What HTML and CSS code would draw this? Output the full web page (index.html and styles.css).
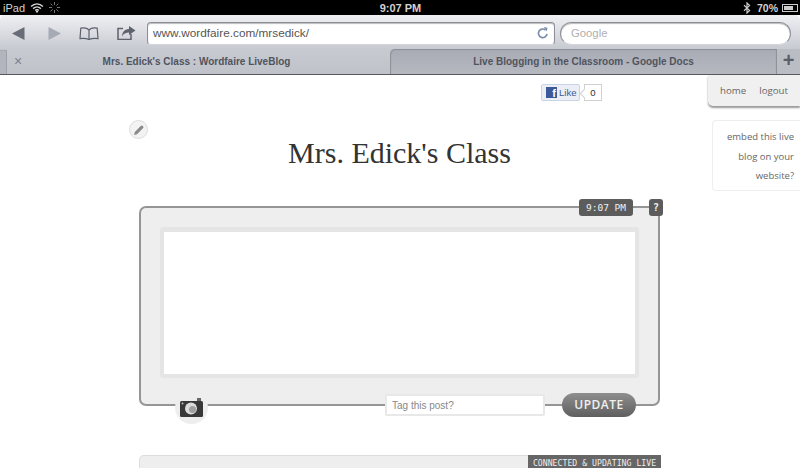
FILE: index.html
```html
<!DOCTYPE html>
<html lang="en">
<head>
<meta charset="utf-8">
<title>Mrs. Edick's Class : Wordfaire LiveBlog</title>
<link rel="stylesheet" href="styles.css">
</head>
<body>
<header class="status">
  <div class="status-left">
    <span>iPad</span>
    <svg class="wifi" width="14" height="10" viewBox="0 0 14 10"><path d="M1 3.6C4.6.2 9.4.2 13 3.600M3.100 5.600c2.400-2.100 5.400-2.100 7.800 0M5.200 7.400c1.100-.9 2.500-.9 3.600 0" fill="none" stroke="#d8d8d8" stroke-width="1.400"/><path d="M7 10 5.600 8.400c.8-.6 2-.6 2.800 0z" fill="#d8d8d8"/></svg>
    <svg class="spin" width="11" height="11" viewBox="0 0 11 11"><path d="M5.500 0v3M5.500 8v3M0 5.500h3M8 5.500h3M1.600 1.600l2 2M7.400 7.400l2 2M1.600 9.400l2-2M7.400 3.600l2-2" stroke="#777" stroke-width="1"/></svg>
  </div>
  <div class="status-time">9:07 PM</div>
  <div class="status-right">
    <svg class="bt" width="8" height="12" viewBox="0 0 8 12"><path d="M1 3.200 6.600 8.400 4 11V1l2.600 2.600L1 8.800" fill="none" stroke="#ccc" stroke-width="1.200"/></svg>
    <span class="pct">70%</span>
    <span class="battery"><span class="battery-fill"></span></span>
  </div>
</header>

<nav class="toolbar">
  <div class="tools">
    <svg class="tool" width="13" height="13" viewBox="0 0 13 13"><path d="M12.500 0v13L0 6.500z" fill="#686d78"/></svg>
    <svg class="tool tool-fwd" width="13" height="13" viewBox="0 0 13 13"><path d="M.5 0v13L13 6.500z" fill="#a6aab4"/></svg>
    <svg class="tool tool-book" width="20" height="13" viewBox="0 0 20 13"><path d="M10 3C8.500 1.300 5 .7 1.800 1.200L1 11.600c3.200-.5 6.500-.3 9 1 2.500-1.300 5.800-1.500 9-1l-.8-10.400C15 .7 11.500 1.300 10 3zm0 0v9.500" fill="none" stroke="#5d626d" stroke-width="1.200"/></svg>
    <svg class="tool tool-share" width="19" height="14" viewBox="0 0 19 14"><path d="M6 2.500H1v11h13V8" fill="none" stroke="#5d626d" stroke-width="1.500"/><path d="M12 0l6.500 4.500L12 9V6.500C9 6.500 6.500 7.500 5 10.500 5 6 8 3 12 3z" fill="#5d626d"/></svg>
  </div>
  <div class="url">
    <span>www.wordfaire.com/mrsedick/</span>
    <svg width="12" height="12" viewBox="0 0 12 12"><path d="M10 7a4.300 4.300 0 1 1-1.500-4" fill="none" stroke="#7b8eac" stroke-width="1.700"/><path d="M6.800 0l3.700.7-.7 3.800z" fill="#7b8eac"/></svg>
  </div>
  <div class="search">Google</div>
</nav>

<div class="tabs">
  <div class="tab-stub"></div>
  <div class="tab tab-active"><span class="tab-close">×</span><span class="tab-title">Mrs. Edick's Class : Wordfaire LiveBlog</span></div>
  <div class="tab tab-back"><span class="tab-title">Live Blogging in the Classroom - Google Docs</span></div>
  <div class="tab-new">+</div>
</div>

<div class="page">
  <main class="main">
    <div class="like-row">
      <span class="like-btn"><span class="fb">f</span>Like</span>
      <span class="like-count">0</span>
    </div>
    <div class="title-row">
      <span class="edit">
        <svg width="12" height="12" viewBox="0 0 12 12"><path d="M1 11l.8-3L8 1.800a1 1 0 0 1 1.400 0l.8.8a1 1 0 0 1 0 1.400L4 10.200z" fill="#8a8a8a"/></svg>
      </span>
      <h1>Mrs. Edick's Class</h1>
    </div>
    <section class="composer">
      <span class="clock">9:07 PM</span>
      <span class="help">?</span>
      <div class="editor"></div>
      <span class="camera">
        <svg width="23" height="19" viewBox="0 0 23 19"><path d="M17 0h4v3h-4z" fill="#666"/><rect y="3" width="23" height="16" rx="1.500" fill="#383838"/><circle cx="11" cy="10.500" r="6" fill="#dcdcdc"/><circle cx="12.500" cy="11.500" r="3.500" fill="#a0a0a0"/><circle cx="2.500" cy="5.500" r="1" fill="#bbb"/></svg>
      </span>
      <input class="tag" type="text" placeholder="Tag this post?">
      <span class="update">UPDATE</span>
    </section>
    <section class="feed">
      <span class="feed-label">CONNECTED &amp; UPDATING LIVE</span>
    </section>
  </main>
  <aside class="side">
    <div class="menu"><span>home</span><span>logout</span></div>
    <div class="embed">embed this live blog on your website?</div>
  </aside>
</div>
</body>
</html>
```

FILE: styles.css
```css
* { box-sizing: border-box; }
html, body { margin: 0; padding: 0; }
body {
  width: 800px;
  height: 468px;
  overflow: hidden;
  background: #fff;
  font-family: "Liberation Sans", Arial, sans-serif;
}

.status {
  height: 15px;
  background: #000;
  color: #d2d2d2;
  font-size: 11px;
  display: grid;
  grid-template-columns: 1fr auto 1fr;
  align-items: center;
  padding: 0 2px 0 3px;
}
.status-left { display: flex; align-items: center; gap: 5px; }
.status-time { font-weight: bold; }
.status-right { display: flex; align-items: center; justify-content: flex-end; font-weight: bold; font-size: 10.500px; }
.bt { margin-right: 6px; }
.pct { margin-right: 4px; }
.battery { width: 16px; height: 8px; border: 1px solid #ccc; padding: 1px; display: block; }
.battery-fill { display: block; width: 9px; height: 4px; background: #ccc; }

.toolbar {
  height: 34px;
  background: linear-gradient(#eff0f3, #c8cad2);
  border-radius: 5px 5px 0 0;
  display: flex;
  align-items: center;
  padding: 2px 9px 0 12px;
}
.tools { display: flex; align-items: center; width: 135px; }
.tool { display: block; }
.tool-fwd { margin-left: 23px; }
.tool-book { margin-left: 18px; }
.tool-share { margin-left: 18px; }
.url {
  width: 408px;
  height: 23px;
  background: #fff;
  border-radius: 4px;
  border: 1px solid #8c8f98;
  border-bottom-color: #d5d6dc;
  box-shadow: inset 0 1px 1px #bbb;
  display: flex;
  align-items: center;
  justify-content: space-between;
  padding: 0 5px;
  font-size: 11.800px;
  color: #555;
}
.search {
  width: 231px;
  height: 23px;
  margin-left: 5px;
  background: #fff;
  border: 1px solid #8c8f98;
  border-bottom-color: #d5d6dc;
  border-radius: 12px;
  box-shadow: inset 0 1px 1px #bbb;
  font-size: 11.300px;
  line-height: 21px;
  padding-left: 10px;
  color: #b0b0b0;
}

.tabs {
  height: 26px;
  display: flex;
  background: #c4c6ce;
  border-bottom: 1px solid #555a60;
  font-size: 10px;
  font-weight: bold;
  color: #50545e;
}
.tab-stub {
  width: 7px;
  height: 24px;
  margin-top: 1px;
  background: #b2b5be;
  border-right: 1px solid #9ea1aa;
  border-top: 1px solid #a6a9b2;
}
.tab { position: relative; display: flex; align-items: center; justify-content: center; height: 25px; }
.tab-active {
  width: 383px;
  background: linear-gradient(#c8cad2, #c0c2ca);
  padding-right: 4px;
}
.tab-back {
  flex: 1;
  background: linear-gradient(#a8abb5, #b6b8c0);
  border-left: 1px solid #8f929b;
  border-radius: 5px 0 0 0;
  box-shadow: inset 0 1px 1px #8a8d96;
}
.tab-close {
  position: absolute;
  left: 7px;
  top: 4px;
  font-size: 14px;
  font-weight: normal;
  color: #7c808a;
  line-height: 16px;
}
.tab-new {
  width: 24px;
  height: 25px;
  background: #bbbdc5;
  border-left: 1px solid #8f929b;
  font-size: 20px;
  line-height: 23px;
  text-align: center;
  color: #5b5f69;
}

.page { display: flex; height: 393px; }
.main { width: 708px; position: relative; }
.side { flex: 1; min-width: 0; }

.like-row {
  display: flex;
  align-items: center;
  margin: 8px 0 0 541px;
  height: 18px;
  font-size: 9.500px;
}
.like-btn {
  width: 39px;
  height: 17px;
  background: #eceef5;
  border: 1px solid #cad4e7;
  border-radius: 2px;
  color: #3b5998;
  display: flex;
  align-items: center;
  gap: 2px;
  padding-left: 4px;
}
.fb {
  width: 11px;
  height: 11px;
  background: #3b5998;
  color: #fff;
  font-weight: bold;
  font-size: 11px;
  line-height: 12px;
  text-align: right;
  padding-right: 1px;
  overflow: hidden;
}
.like-count {
  position: relative;
  width: 18px;
  height: 17px;
  margin-left: 4px;
  border: 1px solid #d1d1d1;
  line-height: 15px;
  text-align: center;
  color: #333;
}
.like-count::before {
  content: "";
  position: absolute;
  left: -4px;
  top: 5px;
  width: 6px;
  height: 6px;
  background: #fff;
  border-left: 1px solid #d1d1d1;
  border-bottom: 1px solid #d1d1d1;
  transform: rotate(45deg);
}

.title-row { position: relative; height: 105px; }
.edit {
  position: absolute;
  left: 129px;
  top: 19px;
  width: 19px;
  height: 19px;
  border-radius: 50%;
  background: #f3f3f3;
  border: 1px solid #ddd;
  display: flex;
  align-items: center;
  justify-content: center;
}
h1 {
  margin: 0;
  padding: 34px 0 0 91px;
  text-align: center;
  font-family: "Liberation Serif", Georgia, serif;
  font-weight: normal;
  font-size: 30px;
  line-height: 36px;
  color: #333;
}

.composer {
  position: relative;
  width: 521px;
  height: 200px;
  margin-left: 139px;
  padding: 19px 0 0 19px;
  background: #eee;
  border: 2px solid #959595;
  border-radius: 7px;
}
.editor {
  width: 479px;
  height: 151px;
  background: #fff;
  border: 4px solid #e5e5e5;
  border-top-width: 5px;
  border-radius: 3px;
}
.clock, .help {
  position: absolute;
  top: -9px;
  height: 17px;
  background: #5c5c5c;
  color: #f0f0f0;
  border-radius: 3px;
  font-family: "DejaVu Sans Mono", "Liberation Mono", monospace;
  font-size: 9.500px;
  line-height: 17px;
  text-align: center;
}
.clock { left: 438px; width: 54px; }
.help { left: 508px; width: 14px; font-size: 10px; font-weight: bold; }
.camera {
  position: absolute;
  left: 34px;
  top: 183px;
  width: 33px;
  height: 33px;
  border-radius: 50%;
  background: #eee;
  display: flex;
  align-items: center;
  justify-content: center;
}
.tag {
  position: absolute;
  left: 244px;
  top: 186px;
  width: 160px;
  height: 22px;
  background: #fff;
  border: 2px solid #e8e8e8;
  border-radius: 2px;
  padding: 0 5px;
  font-family: "Liberation Sans", Arial, sans-serif;
  font-size: 10px;
  outline: none;
}
.tag::placeholder { color: #888; opacity: 1; }
.update {
  position: absolute;
  left: 421px;
  top: 185px;
  width: 74px;
  height: 24px;
  border-radius: 12px;
  background: linear-gradient(#8e8e8e, #5f5f5f);
  color: #f0f0f0;
  font-family: "Open Sans", sans-serif;
  font-size: 12px;
  font-weight: 600;
  letter-spacing: .5px;
  line-height: 24px;
  text-align: center;
}

.feed {
  position: relative;
  width: 522px;
  height: 13px;
  margin: 49px 0 0 139px;
  background: #eee;
  border: 1px solid #ddd;
  border-bottom: 0;
  border-radius: 5px 5px 0 0;
}
.feed-label {
  position: absolute;
  right: -1px;
  top: -1px;
  width: 133px;
  height: 13px;
  background: #666;
  color: #eee;
  font-family: "DejaVu Sans Mono", "Liberation Mono", monospace;
  font-size: 8.200px;
  line-height: 16px;
  text-align: center;
  overflow: hidden;
}

.menu {
  height: 31px;
  background: #f0f0f0;
  border-radius: 0 0 0 5px;
  box-shadow: 0 2px 2px #999;
  font-family: "Open Sans", sans-serif;
  font-size: 9.700px;
  color: #666;
  display: flex;
  gap: 13px;
  padding: 9px 0 0 12px;
}
.embed {
  margin: 14px 0 0 4px;
  height: 71px;
  padding: 6px 6px 0 0;
  border: 1px solid #eee;
  border-right: 0;
  border-radius: 4px 0 0 4px;
  font-family: "Open Sans", sans-serif;
  font-size: 9.500px;
  line-height: 19.500px;
  color: #666;
  text-align: right;
}
```
